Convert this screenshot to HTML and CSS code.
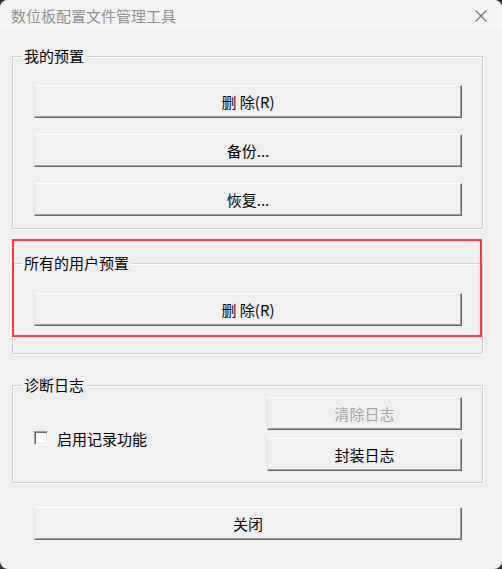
FILE: index.html
```html
<!DOCTYPE html>
<html lang="zh-CN">
<head>
  <meta charset="UTF-8">
  <meta name="viewport" content="width=device-width, initial-scale=1.0">
  <title>数位板配置文件管理工具</title>
  <link rel="stylesheet" href="styles.css">
</head>
<body>

  <div class="dialog">
    <div class="title-bar">
      <span class="title">数位板配置文件管理工具</span>
      <svg class="close" width="12" height="12" viewBox="0 0 12 12">
        <path d="M0.5 0.5 L11.5 11.5 M11.5 0.5 L0.5 11.5" stroke="#6e6e6e" stroke-width="1.1" fill="none"/>
      </svg>
    </div>

    <div class="content">
      <fieldset class="group group-mine">
        <legend>我的预置</legend>
        <div class="stack">
          <button type="button">删 除(R)</button>
          <button type="button">备份...</button>
          <button type="button">恢复...</button>
        </div>
      </fieldset>

      <fieldset class="group group-all">
        <legend>所有的用户预置</legend>
        <div class="stack">
          <button type="button">删 除(R)</button>
        </div>
      </fieldset>

      <fieldset class="group group-log">
        <legend>诊断日志</legend>
        <div class="log-row">
          <label class="check">
            <span class="check-box"></span>
            <span>启用记录功能</span>
          </label>
          <div class="log-buttons">
            <button type="button" disabled>清除日志</button>
            <button type="button">封装日志</button>
          </div>
        </div>
      </fieldset>

      <div class="footer">
        <button type="button">关闭</button>
      </div>
    </div>

    <!-- highlight around the all-users group -->
    <div class="highlight"></div>
  </div>

</body>
</html>
```

FILE: styles.css
```css
html, body {
  margin: 0;
  padding: 0;
  background: #2e2e2e;
}

body {
  font-family: "Noto Sans CJK SC", "Noto Sans", sans-serif;
  font-size: 15px;
  color: #000;
}

.dialog {
  position: relative;
  width: 502px;
  height: 569px;
  background: #f0f0f0;
  border-radius: 8px;
  overflow: hidden;
}

.title-bar {
  height: 30px;
  background: #f3f3f3;
  display: flex;
  align-items: center;
  justify-content: space-between;
  padding: 0 15px 0 11px;
}

.title {
  color: #8f8f8f;
  font-size: 15px;
  line-height: 18px;
  padding-top: 1px;
}

.close {
  margin-top: 1px;
}

.content {
  padding: 17px 19px 0 12px;
}

.group {
  margin: 0;
  padding: 0 20px 0 21px;
  border: 1px solid #cfcfcf;
  box-shadow: inset 1px 1px 0 #fff, 1px 1px 0 #fff;
}

.group legend {
  margin-left: -12px;
  padding: 0 3px 0 2px;
  font-size: 15px;
  line-height: 18px;
}

.group-mine {
  padding-top: 20px;
  padding-bottom: 12px;
}

.group-all {
  margin-top: 25px;
  padding-top: 21px;
  padding-bottom: 27px;
}

.group-log {
  margin-top: 22px;
  padding-top: 3px;
  padding-bottom: 11px;
}

.stack {
  display: flex;
  flex-direction: column;
  gap: 16px;
}

button {
  height: 33px;
  width: 100%;
  padding: 0;
  font-family: inherit;
  font-size: 15px;
  color: #000;
  background: #f0f0f0;
  border: 1px solid;
  border-color: #fff #696969 #696969 #e3e3e3;
  box-shadow: inset -1px -1px 0 #a0a0a0;
}

button:disabled {
  color: #a3a3a3;
}

.log-row {
  display: flex;
  align-items: center;
  justify-content: space-between;
}

.check {
  display: flex;
  align-items: center;
  gap: 9px;
  padding-top: 8px;
}

.check-box {
  width: 12px;
  height: 12px;
  background: #fff;
  border: 1px solid;
  border-color: #a0a0a0 #fff #fff #a0a0a0;
  box-shadow: inset 1px 1px 0 #696969, inset -1px -1px 0 #e3e3e3;
}

.log-buttons {
  width: 195px;
  display: flex;
  flex-direction: column;
  gap: 8px;
}

.footer {
  margin-top: 24px;
  padding: 0 21px 0 22px;
}

.highlight {
  position: absolute;
  left: 12px;
  top: 239px;
  width: 466px;
  height: 94px;
  border: 2px solid #ff3838;
}
```
